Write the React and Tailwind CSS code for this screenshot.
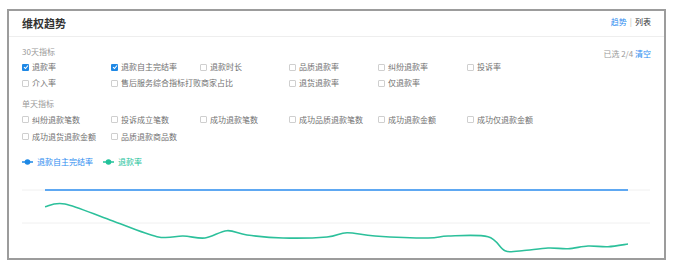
const font = {
  fontFamily: '"Noto Sans CJK SC", "Noto Sans", sans-serif',
};

const days30 = [
  [
    { label: "退款率", checked: true },
    { label: "退款自主完结率", checked: true },
    { label: "退款时长" },
    { label: "品质退款率" },
    { label: "纠纷退款率" },
    { label: "投诉率" },
  ],
  [
    { label: "介入率" },
    { label: "售后服务综合指标打败商家占比" },
    null,
    { label: "退货退款率" },
    { label: "仅退款率" },
  ],
];

const days1 = [
  [
    { label: "纠纷退款笔数" },
    { label: "投诉成立笔数" },
    { label: "成功退款笔数" },
    { label: "成功品质退款笔数" },
    { label: "成功退款金额" },
    { label: "成功仅退款金额" },
  ],
  [{ label: "成功退货退款金额" }, { label: "品质退款商品数" }],
];

// teal curve, in chart coords
const tealPoints = [
  [36, 37.7], [56, 35], [101, 51], [148, 67.7], [174, 67], [196, 69],
  [218, 61.7], [238, 66], [274, 69], [318, 68], [338, 63.7], [366, 67],
  [419, 69], [439, 67], [479, 67.7], [496, 81.7], [513, 81.7], [539, 79],
  [559, 79.7], [579, 77], [599, 77.7], [619, 75],
];

function smoothPath(pts) {
  let d = `M${pts[0][0]},${pts[0][1]}`;
  for (let i = 0; i < pts.length - 1; i++) {
    const p0 = pts[i - 1] || pts[i];
    const p1 = pts[i];
    const p2 = pts[i + 1];
    const p3 = pts[i + 2] || p2;
    const c1x = p1[0] + (p2[0] - p0[0]) / 6;
    const c1y = p1[1] + (p2[1] - p0[1]) / 6;
    const c2x = p2[0] - (p3[0] - p1[0]) / 6;
    const c2y = p2[1] - (p3[1] - p1[1]) / 6;
    d += ` C${c1x},${c1y} ${c2x},${c2y} ${p2[0]},${p2[1]}`;
  }
  return d;
}

function Check({ item }) {
  if (!item) return <div />;
  return (
    <div className="flex items-center gap-[3px] whitespace-nowrap min-w-0">
      {item.checked ? (
        <span className="shrink-0 w-[7px] h-[7px] rounded-[1px] bg-[#1e88e5] flex items-center justify-center">
          <svg width="6" height="6" viewBox="0 0 6 6">
            <path d="M1 3.1 L2.5 4.5 L5 1.5" fill="none" stroke="#fff" strokeWidth="1.1" />
          </svg>
        </span>
      ) : (
        <span className="shrink-0 w-[7px] h-[7px] rounded-[1px] border border-[#cfcfcf] bg-white" />
      )}
      <span className="text-[8px] leading-none text-[#707070]">{item.label}</span>
    </div>
  );
}

function Rows({ rows, h }) {
  return (
    <div>
      {rows.map((row, i) => (
        <div key={i} className={`grid grid-cols-[89px_89px_89px_89px_89px_89px] items-center ${h}`}>
          {row.map((item, j) => (
            <Check key={j} item={item} />
          ))}
        </div>
      ))}
    </div>
  );
}

export default function App() {
  return (
    <div className="w-[675px] h-[269px] bg-white pt-[9px] pl-[7px]" style={font}>
      <div className="w-[659px] h-[251px] border-2 border-[#9c9c9c] bg-white flex flex-col">
        {/* header */}
        <div className="h-[26px] border-b border-[#eeeeee] flex items-center justify-between pl-[13px] pr-[13px]">
          <span className="text-[11px] font-bold text-[#333]">维权趋势</span>
          <span className="text-[8px] text-[#333] flex items-center gap-[3px] -mt-[3px]">
            <span className="text-[#2d8cf0]">趋势</span>
            <span className="text-[#bbb]">|</span>
            <span>列表</span>
          </span>
        </div>

        <div className="px-[13px]">
          {/* 30 days */}
          <div className="h-[14px] mt-[8px] flex items-center justify-between">
            <span className="text-[8px] text-[#999]">30天指标</span>
            <span className="text-[8px] text-[#999] mt-[3px]">
              已选 2/4 <span className="text-[#2d8cf0]">清空</span>
            </span>
          </div>
          <Rows rows={days30} h="h-[16px]" />

          {/* 1 day */}
          <div className="h-[14px] mt-[6px] flex items-center">
            <span className="text-[8px] text-[#999]">单天指标</span>
          </div>
          <Rows rows={days1} h="h-[17px]" />

          {/* legend */}
          <div className="h-[14px] mt-[10px] flex items-center gap-[10px]">
            <div className="flex items-center gap-[4px]">
              <svg width="11" height="6" viewBox="0 0 11 6">
                <line x1="0" y1="3" x2="11" y2="3" stroke="#1e88e5" strokeWidth="1.5" />
                <circle cx="5.5" cy="3" r="2.8" fill="#1e88e5" />
              </svg>
              <span className="text-[8px] text-[#2d8cf0]">退款自主完结率</span>
            </div>
            <div className="flex items-center gap-[4px]">
              <svg width="11" height="6" viewBox="0 0 11 6">
                <line x1="0" y1="3" x2="11" y2="3" stroke="#22c29a" strokeWidth="1.5" />
                <circle cx="5.5" cy="3" r="2.8" fill="#22c29a" />
              </svg>
              <span className="text-[8px] text-[#22c29a]">退款率</span>
            </div>
          </div>
        </div>

        {/* chart */}
        <svg width="655" height="89" viewBox="0 0 655 89" className="block">
          <line x1="13" y1="21" x2="641" y2="21" stroke="#f0f0f0" strokeWidth="1" />
          <line x1="13" y1="54" x2="641" y2="54" stroke="#f0f0f0" strokeWidth="1" />
          <line x1="36" y1="21" x2="619" y2="21" stroke="#2b8ef0" strokeWidth="1.6" />
          <path d={smoothPath(tealPoints)} fill="none" stroke="#2cc09b" strokeWidth="1.6" />
        </svg>
      </div>
    </div>
  );
}
